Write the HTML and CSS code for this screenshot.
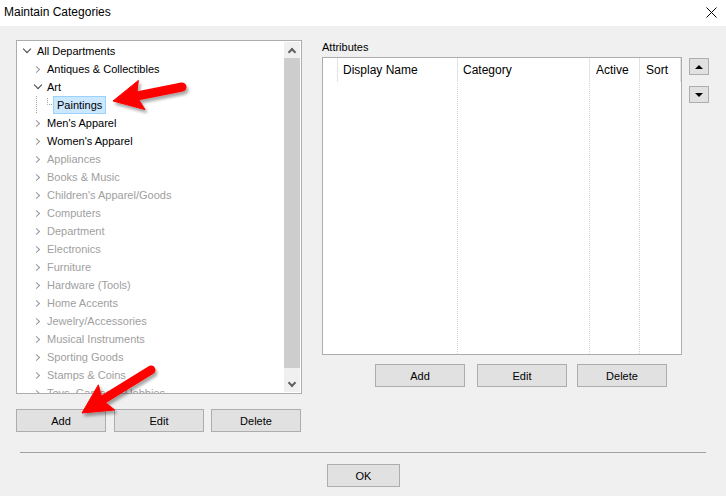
FILE: index.html
```html
<!DOCTYPE html>
<html lang="en">
<head>
    <meta charset="UTF-8">
    <meta name="viewport" content="width=device-width, initial-scale=1.0">
    <title>Maintain Categories</title>
    <link rel="stylesheet" href="styles.css">
</head>
<body>
    <div class="titlebar">
        <span class="title">Maintain Categories</span>
        <svg class="close" width="11" height="11" viewBox="0 0 11 11">
            <path d="M0.5 0.5 L10.5 10.5 M10.5 0.5 L0.5 10.5" stroke="#000" stroke-width="1" fill="none"/>
        </svg>
    </div>

    <div class="dialog">
        <div class="panes">
            <!-- category tree -->
            <div class="left-pane">
                <div class="tree">
                    <ul class="tree-list">
                        <li class="node l0 open"><span class="chev"></span><span class="label">All Departments</span></li>
                        <li class="node l1"><span class="chev"></span><span class="label">Antiques &amp; Collectibles</span></li>
                        <li class="node l1 open"><span class="chev"></span><span class="label">Art</span></li>
                        <li class="node l2">
                            <svg class="lines" width="19" height="18" viewBox="0 0 19 18">
                                <path d="M2.5 0 V18 M13.5 2 V8.5 H19" stroke="#a0a0a0" stroke-width="1" stroke-dasharray="1 1" fill="none"/>
                            </svg>
                            <span class="label selected">Paintings</span>
                        </li>
                        <li class="node l1"><span class="chev"></span><span class="label">Men's Apparel</span></li>
                        <li class="node l1"><span class="chev"></span><span class="label">Women's Apparel</span></li>
                        <li class="node l1 off"><span class="chev"></span><span class="label">Appliances</span></li>
                        <li class="node l1 off"><span class="chev"></span><span class="label">Books &amp; Music</span></li>
                        <li class="node l1 off"><span class="chev"></span><span class="label">Children's Apparel/Goods</span></li>
                        <li class="node l1 off"><span class="chev"></span><span class="label">Computers</span></li>
                        <li class="node l1 off"><span class="chev"></span><span class="label">Department</span></li>
                        <li class="node l1 off"><span class="chev"></span><span class="label">Electronics</span></li>
                        <li class="node l1 off"><span class="chev"></span><span class="label">Furniture</span></li>
                        <li class="node l1 off"><span class="chev"></span><span class="label">Hardware (Tools)</span></li>
                        <li class="node l1 off"><span class="chev"></span><span class="label">Home Accents</span></li>
                        <li class="node l1 off"><span class="chev"></span><span class="label">Jewelry/Accessories</span></li>
                        <li class="node l1 off"><span class="chev"></span><span class="label">Musical Instruments</span></li>
                        <li class="node l1 off"><span class="chev"></span><span class="label">Sporting Goods</span></li>
                        <li class="node l1 off"><span class="chev"></span><span class="label">Stamps &amp; Coins</span></li>
                        <li class="node l1 off"><span class="chev"></span><span class="label">Toys, Games &amp; Hobbies</span></li>
                    </ul>
                    <div class="scrollbar">
                        <div class="sb-btn up"></div>
                        <div class="sb-thumb"></div>
                        <div class="sb-track"></div>
                        <div class="sb-btn down"></div>
                    </div>
                </div>
                <div class="btn-row left-btns">
                    <button class="btn">Add</button>
                    <button class="btn">Edit</button>
                    <button class="btn">Delete</button>
                </div>
            </div>

            <!-- attributes grid -->
            <div class="right-pane">
                <div class="group-label">Attributes</div>
                <div class="grid-row">
                    <div class="grid">
                        <div class="grid-head">
                            <div class="cell c0"></div>
                            <div class="cell c1">Display Name</div>
                            <div class="cell c2">Category</div>
                            <div class="cell c3">Active</div>
                            <div class="cell c4">Sort</div>
                        </div>
                        <div class="grid-body">
                            <div class="col c0"></div>
                            <div class="col c1 dotted"></div>
                            <div class="col c2 dotted"></div>
                            <div class="col c3 dotted"></div>
                            <div class="col c4"></div>
                        </div>
                    </div>
                    <div class="move-btns">
                        <button class="btn move"><span class="tri up"></span></button>
                        <button class="btn move"><span class="tri down"></span></button>
                    </div>
                </div>
                <div class="btn-row right-btns">
                    <button class="btn">Add</button>
                    <button class="btn">Edit</button>
                    <button class="btn">Delete</button>
                </div>
            </div>
        </div>

        <div class="separator"></div>

        <div class="footer">
            <button class="btn ok">OK</button>
        </div>
    </div>

    <!-- annotation arrows drawn over the dialog -->
    <svg class="arrows" width="726" height="496" viewBox="0 0 726 496">
        <defs>
            <filter id="shadow" x="-30%" y="-30%" width="160%" height="160%">
                <feDropShadow dx="2" dy="3" stdDeviation="1.6" flood-color="#000" flood-opacity="0.35"/>
            </filter>
        </defs>
        <g filter="url(#shadow)" fill="#f00" stroke="#f00">
            <line x1="182" y1="87" x2="137" y2="96" stroke-width="9" stroke-linecap="round"/>
            <polygon points="113,101 138.4,80.4 136.5,96 145,109.6" stroke-width="1" stroke-linejoin="round"/>
        </g>
        <g filter="url(#shadow)" fill="#f00" stroke="#f00">
            <line x1="151" y1="370" x2="104" y2="399" stroke-width="9" stroke-linecap="round"/>
            <polygon points="82,413 98.4,384.8 102.3,400.1 114.8,410" stroke-width="1" stroke-linejoin="round"/>
        </g>
    </svg>
</body>
</html>
```

FILE: styles.css
```css
body {
    margin: 0;
    padding: 0;
    width: 726px;
    height: 496px;
    overflow: hidden;
    position: relative;
    background-color: #f0f0f0;
    font-family: "Liberation Sans", Arial, sans-serif;
    font-size: 11px;
    color: #000;
}

/* title bar */

.titlebar {
    height: 26px;
    background-color: #fff;
    display: flex;
    align-items: center;
    justify-content: space-between;
    padding: 0 9px 2px 4px;
    box-sizing: border-box;
}

.title {
    font-size: 12px;
}

/* dialog body */

.dialog {
    padding: 14px 0 0 16px;
}

.panes {
    display: flex;
    gap: 20px;
}

.left-pane {
    width: 286px;
}

.tree {
    height: 354px;
    border: 1px solid #adadad;
    background-color: #fff;
    box-sizing: border-box;
    display: flex;
}

.tree-list {
    list-style: none;
    margin: 0;
    padding: 1px 0 0 0;
    flex: 1;
    overflow: hidden;
}

.node {
    height: 18px;
    display: flex;
    align-items: center;
    white-space: nowrap;
}

.node.l0 {
    padding-left: 4px;
}

.node.l1 {
    padding-left: 15px;
}

.node.l2 {
    padding-left: 17px;
}

.chev {
    width: 11px;
    height: 18px;
    display: flex;
    align-items: center;
    justify-content: center;
}

.chev::before {
    content: "";
    width: 4px;
    height: 4px;
    border-right: 1.7px solid #959595;
    border-bottom: 1.7px solid #959595;
    transform: rotate(-45deg);
    margin-left: -2px;
}

.open .chev::before {
    width: 5px;
    height: 5px;
    border-color: #404040;
    transform: rotate(45deg);
    margin: -4px 0 0 0;
}

.label {
    margin-left: 5px;
    line-height: 16px;
}

.l1 .label {
    margin-left: 4px;
}

.l2 .label {
    margin-left: 0;
}

.label.selected {
    background-color: #cce8ff;
    border: 1px solid #99d1ff;
    padding: 0 3px;
}

.off .label {
    color: #a0a0a0;
}

.lines {
    display: block;
}

/* scrollbar */

.scrollbar {
    width: 16px;
    margin: 1px 1px 1px 0;
    background-color: #f0f0f0;
    display: flex;
    flex-direction: column;
}

.sb-btn {
    height: 16px;
    display: flex;
    align-items: center;
    justify-content: center;
}

.sb-btn::before {
    content: "";
    width: 4px;
    height: 4px;
    border-left: 2px solid #606060;
    border-top: 2px solid #606060;
    transform: rotate(45deg);
    margin-top: 3px;
}

.sb-btn.down::before {
    transform: rotate(-135deg);
    margin-top: -3px;
}

.sb-thumb {
    flex: 1;
    background-color: #cdcdcd;
}

.sb-track {
    height: 8px;
}

/* buttons */

.btn {
    width: 90px;
    height: 23px;
    padding: 0;
    background-color: #e1e1e1;
    border: 1px solid #adadad;
    font-family: inherit;
    font-size: 11px;
    color: #000;
    box-sizing: border-box;
}

.btn-row {
    display: flex;
}

.left-btns {
    margin-top: 15px;
}

.left-btns .btn:nth-child(2) {
    margin-left: 8px;
}

.left-btns .btn:nth-child(3) {
    margin-left: 7px;
}

/* attributes */

.right-pane {
    width: 390px;
}

.group-label {
    height: 17px;
    line-height: 14px;
}

.grid-row {
    display: flex;
}

.grid {
    width: 360px;
    height: 298px;
    border: 1px solid #adadad;
    background-color: #fff;
    box-sizing: border-box;
    display: flex;
    flex-direction: column;
}

.grid-head {
    height: 24px;
    display: flex;
    flex-shrink: 0;
}

.cell {
    line-height: 24px;
    font-size: 12px;
    padding-left: 5px;
    box-sizing: border-box;
    border-right: 1px solid #e3e3e3;
    white-space: nowrap;
}

.grid-body {
    flex: 1;
    display: flex;
    padding-top: 1px;
}

.col {
    box-sizing: border-box;
}

.col.dotted {
    border-right: 1px dotted #d4d4d4;
}

.c0 { width: 15px; padding-left: 0; }
.c1 { width: 120px; }
.c2 { width: 132px; }
.c3 { width: 50px; padding-left: 6px; }
.c4 { width: 41px; padding-left: 6px; }

.move-btns {
    margin-left: 7px;
    padding-top: 1px;
    display: flex;
    flex-direction: column;
    gap: 11px;
}

.btn.move {
    width: 20px;
    height: 17px;
    display: flex;
    align-items: center;
    justify-content: center;
}

.tri {
    width: 0;
    height: 0;
    border-left: 4px solid transparent;
    border-right: 4px solid transparent;
}

.tri.up {
    border-bottom: 4px solid #000;
}

.tri.down {
    border-top: 4px solid #000;
}

.right-btns {
    margin: 9px 0 0 53px;
}

.right-btns .btn:nth-child(2) {
    margin-left: 12px;
}

.right-btns .btn:nth-child(3) {
    margin-left: 10px;
}

/* footer */

.separator {
    width: 686px;
    height: 1px;
    margin: 20px 0 0 4px;
    background-color: #a0a0a0;
}

.footer {
    padding: 11px 0 0 311px;
}

.btn.ok {
    width: 73px;
}

.arrows {
    position: absolute;
    left: 0;
    top: 0;
    pointer-events: none;
}
```
